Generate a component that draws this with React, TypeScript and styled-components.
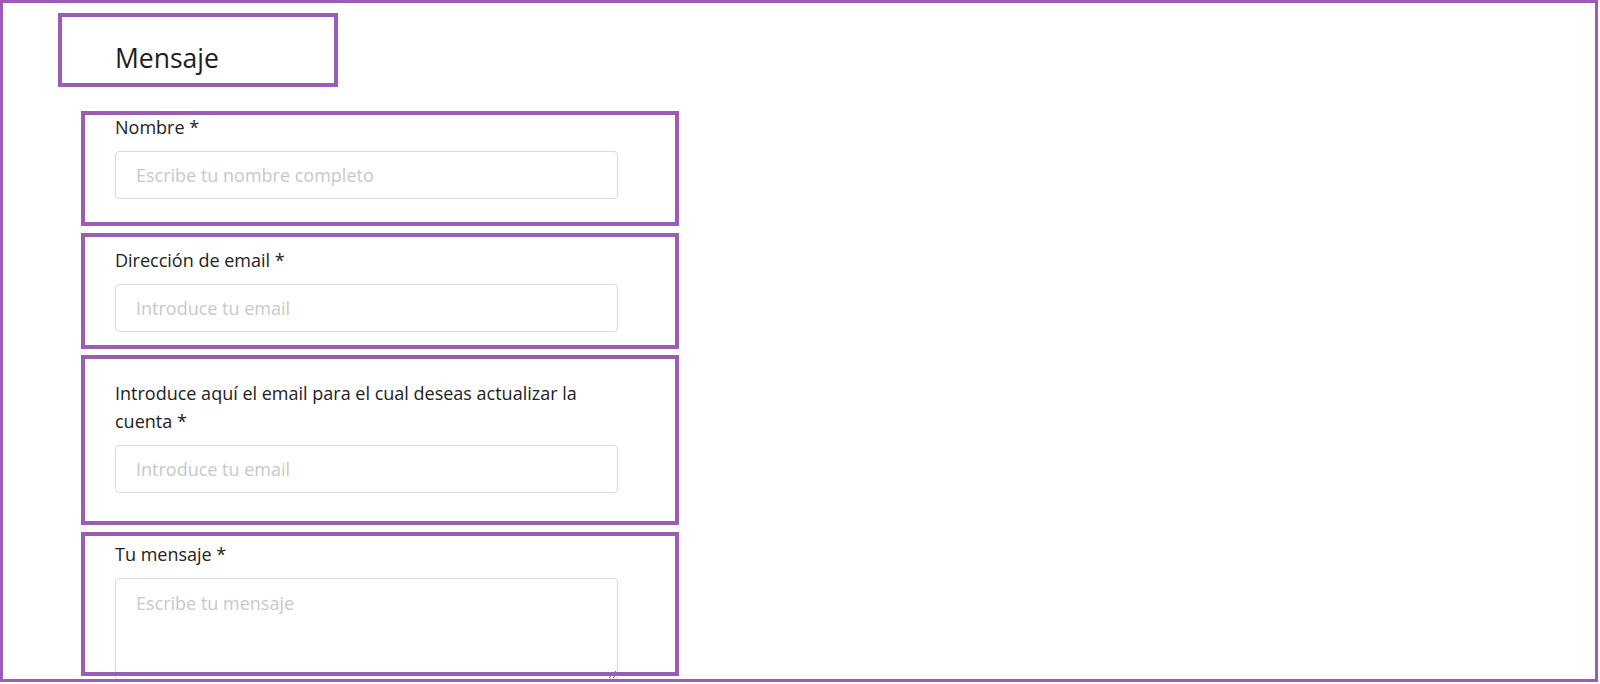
import React from 'react';
import styled, { createGlobalStyle } from 'styled-components';

const accent = '#9b5cb6';

const GlobalStyle = createGlobalStyle`
  html, body {
    margin: 0;
    padding: 0;
    background: #fff;
  }
  body {
    font-family: "Open Sans", "Liberation Sans", sans-serif;
    color: #222;
  }
  * {
    box-sizing: border-box;
  }
`;

const Frame = styled.div`
  width: 1598px;
  height: 682px;
  border: 3px solid ${accent};
  overflow: hidden;
  background: #fff;
`;

const Content = styled.div`
  display: flex;
  flex-direction: column;
  padding: 37px 0 0 112px;
  width: 616px;
`;

// purple annotation drawn over a part of the form
interface MarkProps {
  $top: number;
  $bottom: number;
  $left: number;
  $right: number;
}

const Marked = styled.div<MarkProps>`
  position: relative;

  &::after {
    content: '';
    position: absolute;
    top: ${(p) => p.$top}px;
    bottom: ${(p) => p.$bottom}px;
    left: ${(p) => p.$left}px;
    right: ${(p) => p.$right}px;
    border: 4px solid ${accent};
    pointer-events: none;
  }
`;

const Heading = styled(Marked)`
  margin: 0 0 37px;
  width: 223px;
  font-size: 26.5px;
  line-height: 36px;
  font-weight: 400;
  color: #1e1e1e;
`;

const Fields = styled.div`
  display: flex;
  flex-direction: column;
  gap: 47px;
  width: 503px;
`;

const Field = styled(Marked)`
  display: flex;
  flex-direction: column;
`;

const Label = styled.label`
  display: block;
  font-size: 18px;
  line-height: 28px;
  color: #222;
  margin-bottom: 10px;
`;

const Input = styled.input`
  display: block;
  width: 100%;
  height: 48px;
  padding: 0 20px;
  border: 1px solid #dadada;
  border-radius: 4px;
  background: #fff;
  font-family: "Open Sans", "Liberation Sans", sans-serif;
  font-size: 18px;
  color: #222;
  outline: none;

  &::placeholder {
    color: #c8c8cc;
  }
`;

const TextArea = styled.textarea`
  display: block;
  width: 100%;
  height: 102px;
  padding: 12px 20px;
  border: 1px solid #dadada;
  border-radius: 4px;
  background: #fff;
  font-family: "Open Sans", "Liberation Sans", sans-serif;
  font-size: 18px;
  line-height: 24px;
  color: #222;
  outline: none;

  &::placeholder {
    color: #c8c8cc;
  }
`;

const fields = [
  {
    id: 'nombre',
    label: 'Nombre *',
    placeholder: 'Escribe tu nombre completo',
    mark: { $top: -2, $bottom: -27 },
  },
  {
    id: 'email',
    label: 'Dirección de email *',
    placeholder: 'Introduce tu email',
    mark: { $top: -13, $bottom: -17 },
  },
  {
    id: 'cuenta',
    label: 'Introduce aquí el email para el cual deseas actualizar la cuenta *',
    placeholder: 'Introduce tu email',
    mark: { $top: -24, $bottom: -32 },
  },
];

export default function App() {
  return (
    <>
      <GlobalStyle />
      <Frame>
        <Content>
          <Heading as="h2" $top={-27} $bottom={-11} $left={-57} $right={0}>
            Mensaje
          </Heading>
          <Fields>
            {fields.map((f) => (
              <Field key={f.id} {...f.mark} $left={-34} $right={-61}>
                <Label htmlFor={f.id}>{f.label}</Label>
                <Input id={f.id} placeholder={f.placeholder} />
              </Field>
            ))}
            <Field $top={-8} $bottom={4} $left={-34} $right={-61}>
              <Label htmlFor="mensaje">Tu mensaje *</Label>
              <TextArea id="mensaje" placeholder="Escribe tu mensaje" />
            </Field>
          </Fields>
        </Content>
      </Frame>
    </>
  );
}
